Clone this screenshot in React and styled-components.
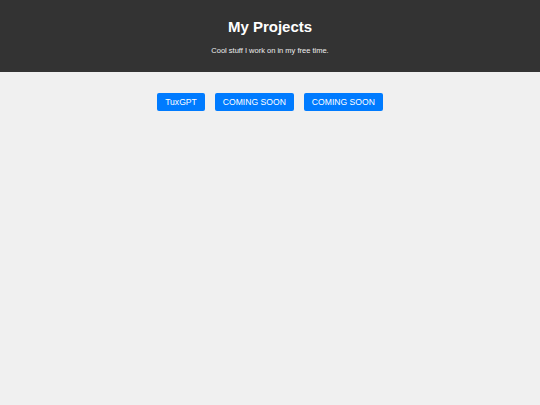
import styled, { createGlobalStyle } from 'styled-components'

const GlobalStyle = createGlobalStyle`
    body {
        margin: 0;
        background-color: #f0f0f0;
        font-family: "Liberation Sans", Arial, sans-serif;
    }
`

const Header = styled.header`
    background-color: #333333;
    color: #ffffff;
    text-align: center;
    height: 72px;
    box-sizing: border-box;
    padding-top: 17px;
`

const Title = styled.h1`
    margin: 0;
    font-size: 15px;
    line-height: 19px;
    font-weight: 700;
`

const Subtitle = styled.p`
    margin: 10px 0 0;
    font-size: 7.5px;
    line-height: 9px;
    color: #eeeeee;
`

const Projects = styled.div`
    display: flex;
    justify-content: center;
    gap: 10px;
    padding-top: 21px;
`

const Button = styled.a`
    display: inline-block;
    background-color: #007bff;
    color: #ffffff;
    font-size: 8.6px;
    line-height: 18px;
    height: 18px;
    padding: 0 8px;
    border-radius: 2px;
    text-decoration: none;
    cursor: pointer;
`

const projects = ['TuxGPT', 'COMING SOON', 'COMING SOON']

const App = () => {
    return (
        <>
            <GlobalStyle />
            <Header>
                <Title>My Projects</Title>
                <Subtitle>Cool stuff I work on in my free time.</Subtitle>
            </Header>
            <Projects>
                {projects.map((name, index) => (
                    <Button key={index}>{name}</Button>
                ))}
            </Projects>
        </>
    )
}

export default App
